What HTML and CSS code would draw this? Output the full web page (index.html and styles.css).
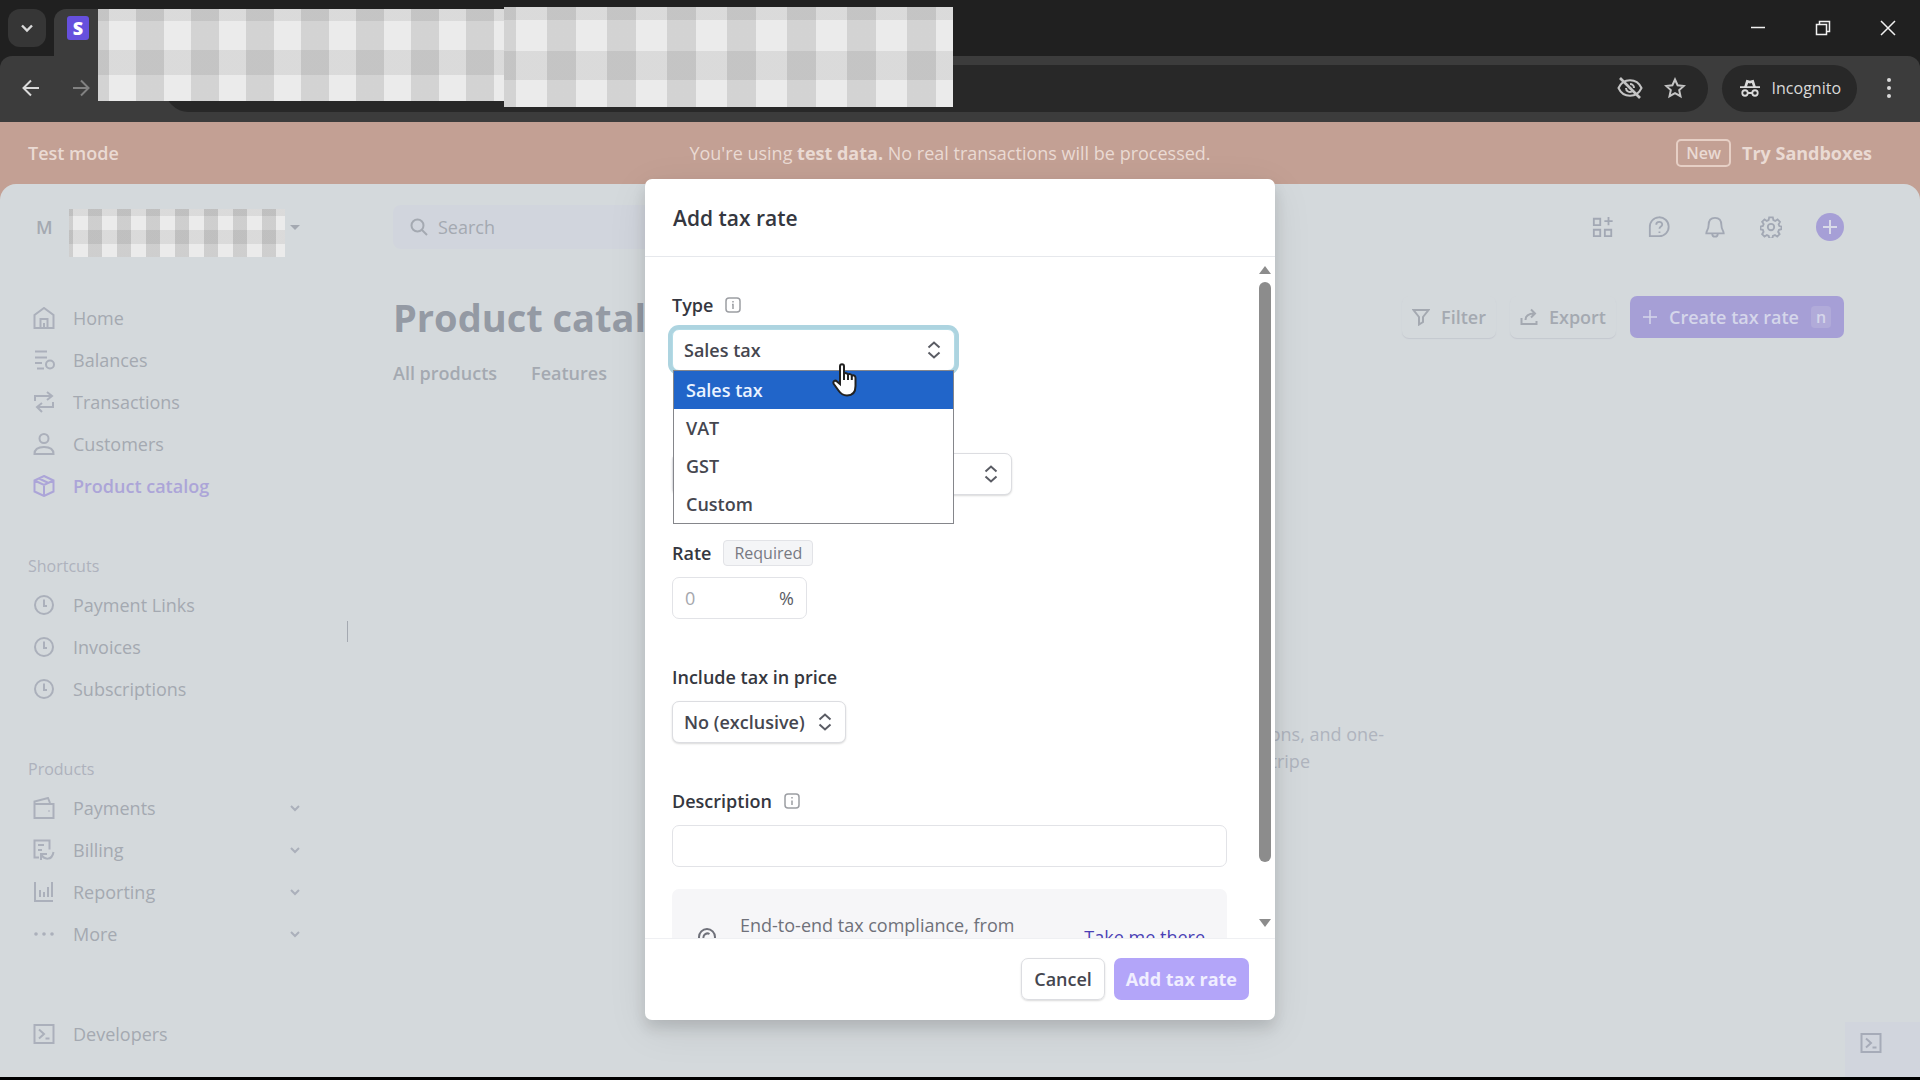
FILE: index.html
```
<!DOCTYPE html>
<html lang="en">
<head>
    <meta charset="UTF-8">
    <meta name="viewport" content="width=device-width, initial-scale=1.0">
    <title>Product catalog - Add tax rate</title>
    <link rel="stylesheet" href="styles.css">
</head>
<body>
    <!-- Browser window -->
    <header class="browser">
        <div class="tab-strip">
            <button class="tab-search" aria-label="Search tabs">
                <svg width="14" height="14" viewBox="0 0 14 14"><path d="M2 4.500l5 5 5-5" stroke-width="2.400"/></svg>
            </button>
            <div class="tab"><span class="favicon">S</span></div>
            <div class="window-controls">
                <button aria-label="Minimize"><svg width="16" height="16" viewBox="0 0 16 16"><path d="M1 7.500h14"/></svg></button>
                <button aria-label="Restore"><svg width="16" height="16" viewBox="0 0 16 16"><path d="M1.500 4.500h10v10h-10zM4.500 4.500v-3h10v10h-3"/></svg></button>
                <button aria-label="Close"><svg width="16" height="16" viewBox="0 0 16 16"><path d="M1 1l14 14M15 1L1 15"/></svg></button>
            </div>
        </div>
        <div class="toolbar">
            <button aria-label="Back"><svg width="18" height="18" viewBox="0 0 18 18"><path d="M17 9H2M9 1.500L1.500 9 9 16.500"/></svg></button>
            <button class="muted" aria-label="Forward"><svg width="18" height="18" viewBox="0 0 18 18"><path d="M1 9h15M9 1.500L16.500 9 9 16.500"/></svg></button>
            <div class="address-bar">
                <svg width="26" height="22" viewBox="0 0 26 22"><path d="M1.500 11C4 5.500 8 3.200 13 3.200S22 5.500 24.500 11C22 16.500 18 18.800 13 18.800S4 16.500 1.500 11z"/><path d="M9 11a4 4 0 0 0 6 3.500M13 7a4 4 0 0 1 4 4"/><path d="M3 1l20 20" stroke-width="2.600"/></svg>
                <svg width="22" height="22" viewBox="0 0 22 22"><path d="M11 2.500l2.600 5.700 6.200.7-4.600 4.200 1.300 6.100L11 16.100l-5.500 3.100 1.300-6.100L2.200 8.900l6.200-.7z"/></svg>
            </div>
            <div class="incognito">
                <svg width="20" height="20" viewBox="0 0 22 20"><path d="M0 9h22M8 15.500h6"/><path class="solid" d="M4.500 9L7 1l4 1 4-1 2.500 8h-3L13 4.500 11 5l-2-.500L7.500 9z"/><circle cx="5.500" cy="15.500" r="3"/><circle cx="16.500" cy="15.500" r="3"/></svg>
                Incognito
            </div>
            <button aria-label="Menu"><svg class="solid" width="6" height="22" viewBox="0 0 6 22"><circle cx="3" cy="3" r="2"/><circle cx="3" cy="11" r="2"/><circle cx="3" cy="19" r="2"/></svg></button>
        </div>
        <div class="redacted redacted-tab"></div>
        <div class="redacted redacted-url"></div>
    </header>

    <div class="viewport">
        <div class="banner">
            <strong>Test mode</strong>
            <span>You're using <b>test data.</b> No real transactions will be processed.</span>
            <div class="sandbox">
                <span class="new-badge">New</span>
                <a href="#">Try Sandboxes</a>
            </div>
        </div>

        <div class="dashboard">
            <aside class="sidebar">
                <div class="account">
                    <span class="account-logo">M</span>
                    <span class="redacted redacted-account"></span>
                    <svg class="solid" width="10" height="5" viewBox="0 0 10 5"><path d="M0 0h10L5 5z"/></svg>
                </div>
                <nav class="nav">
                    <a href="#"><svg width="22" height="22" viewBox="0 0 22 22"><path d="M1.500 8L11 1l9.500 7v13h-19zM7.500 21v-9h7v9M11 21v-5"/></svg>Home</a>
                    <a href="#"><svg width="22" height="22" viewBox="0 0 22 22"><path d="M2 2.500h12M2 8.500h12M2 14h7M4 19.500h7"/><circle cx="17" cy="15.500" r="4"/></svg>Balances</a>
                    <a href="#"><svg width="22" height="22" viewBox="0 0 22 22"><path d="M2 10V5h17M14 1l5 4-5 4M20 11v5H4M9 12l-5 4 5 5"/></svg>Transactions</a>
                    <a href="#"><svg width="22" height="22" viewBox="0 0 22 22"><circle cx="11" cy="5.500" r="4.500"/><path d="M1.500 21c0-5 4-7 9.500-7s9.500 2 9.500 7z"/></svg>Customers</a>
                    <a href="#" class="active"><svg width="22" height="22" viewBox="0 0 22 22"><path d="M11 1l9.500 4.500v11L11 21l-9.500-4.500v-11zM1.500 5.500L11 10l9.500-4.500M11 10v11M6 3.500l9.500 4.500"/></svg>Product catalog</a>
                </nav>
                <h2>Shortcuts</h2>
                <nav class="nav">
                    <a href="#"><svg width="22" height="22" viewBox="0 0 22 22"><circle cx="11" cy="11" r="9"/><path d="M11 5.500v6.500h3"/></svg>Payment Links</a>
                    <a href="#"><svg width="22" height="22" viewBox="0 0 22 22"><circle cx="11" cy="11" r="9"/><path d="M11 5.500v6.500h3"/></svg>Invoices</a>
                    <a href="#"><svg width="22" height="22" viewBox="0 0 22 22"><circle cx="11" cy="11" r="9"/><path d="M11 5.500v6.500h3"/></svg>Subscriptions</a>
                </nav>
                <h2>Products</h2>
                <nav class="nav">
                    <a href="#"><svg width="22" height="22" viewBox="0 0 22 22"><path d="M1.500 7h19v14h-19zM1.500 7V4.500L15 1l2 5M16 13.500v1"/></svg>Payments<svg class="chevron" width="12" height="8" viewBox="0 0 12 8"><path d="M2 2l4 4 4-4"/></svg></a>
                    <a href="#"><svg width="22" height="22" viewBox="0 0 22 22"><path d="M6 18.500H1.500v-17h15v9M5 6h6M5 11h4M8 21v-6h6M8 15c3 6 11 7 12.500-2"/></svg>Billing<svg class="chevron" width="12" height="8" viewBox="0 0 12 8"><path d="M2 2l4 4 4-4"/></svg></a>
                    <a href="#"><svg width="22" height="22" viewBox="0 0 22 22"><path d="M2 1v19h18M7 9v7M11 11v5M15 6v10M19 1v15"/></svg>Reporting<svg class="chevron" width="12" height="8" viewBox="0 0 12 8"><path d="M2 2l4 4 4-4"/></svg></a>
                    <a href="#"><svg class="solid" width="22" height="22" viewBox="0 0 22 22"><circle cx="3" cy="11" r="1.800"/><circle cx="11" cy="11" r="1.800"/><circle cx="19" cy="11" r="1.800"/></svg>More<svg class="chevron" width="12" height="8" viewBox="0 0 12 8"><path d="M2 2l4 4 4-4"/></svg></a>
                </nav>
                <nav class="nav nav-bottom">
                    <a href="#"><svg width="22" height="22" viewBox="0 0 22 22"><path d="M1.500 2h19v18h-19zM6 6.500l5 4.500-5 4.500M12.500 15.500h4"/></svg>Developers</a>
                </nav>
                <span class="resize-handle"></span>
            </aside>

            <main class="main">
                <div class="topbar">
                    <label class="search">
                        <svg width="18" height="18" viewBox="0 0 18 18"><circle cx="7.500" cy="7.500" r="6"/><path d="M12 12l5 5"/></svg>
                        <input type="search" placeholder="Search" aria-label="Search">
                    </label>
                    <div class="topbar-icons">
                        <button aria-label="Apps"><svg width="22" height="22" viewBox="0 0 24 24"><path d="M2 3h7v7H2zM2 15h7v7H2zM14 15h7v7h-7zM18 1v9M13.500 5.500h9"/></svg></button>
                        <button aria-label="Help"><svg width="22" height="22" viewBox="0 0 24 24"><path d="M2 22v-9.500A10.300 10.300 0 1 1 12.300 22zM9 9.500c0-4 6.500-4 6.500-.3 0 2.300-3 2.300-3 4.800M12.500 17v1.500"/></svg></button>
                        <button aria-label="Notifications"><svg width="22" height="22" viewBox="0 0 24 24"><path d="M5 10c0-5 2.500-8 7-8s7 3 7 8c0 5 2.500 6 2.500 9h-19c0-3 2.500-4 2.500-9zM9 19.500c0 4 6 4 6 0"/></svg></button>
                        <button aria-label="Settings"><svg width="22" height="22" viewBox="0 0 24 24"><circle cx="12" cy="12" r="3.500"/><path d="M10 1.500h4l.6 3 2 .9 2.600-1.700 2.600 2.800-1.500 2.500.8 2 2.400.6v2.800l-2.800.7-.9 2.200 1.600 2.500-2.600 2.600-2.500-1.600-2.200.9-.6 2.800h-3.300l-.7-2.800-2-.9-2.600 1.600-2.600-2.600 1.600-2.500-.8-2.200-2.600-.6v-3l2.700-.7.8-2L2.300 6.300l2.600-2.600L7.400 5.400l2-.9z"/></svg></button>
                        <button class="add-button" aria-label="Create"><svg width="16" height="16" viewBox="0 0 16 16"><path d="M8 1v14M1 8h14"/></svg></button>
                    </div>
                </div>
                <div class="page-head">
                    <h1>Product catalog</h1>
                    <div class="page-actions">
                        <button class="ghost"><svg width="18" height="18" viewBox="0 0 18 18"><path d="M1.500 2h15L11 9v5l-4 2.500V9z"/></svg>Filter</button>
                        <button class="ghost"><svg width="18" height="18" viewBox="0 0 18 18"><path d="M1.500 10v6h15v-3M5.500 12c0-4 3-6.500 9-6.500M11 1.500l4 4-4 4"/></svg>Export</button>
                        <button class="create"><svg width="14" height="14" viewBox="0 0 14 14"><path d="M7 0v14M0 7h14"/></svg>Create tax rate<kbd>n</kbd></button>
                    </div>
                </div>
                <div class="tabs">
                    <a href="#">All products</a>
                    <a href="#">Features</a>
                </div>
                <div class="empty">
                    <p>Use tax rates on invoices, subscriptions, and one-</p>
                    <p class="short">time payments with Stripe</p>
                </div>
            </main>
            <button class="console" aria-label="Open console"><svg width="22" height="22" viewBox="0 0 22 22"><path d="M1.500 2h19v18h-19zM6 6.500l5 4.500-5 4.500M12.500 15.500h4"/></svg></button>
        </div>

        <!-- Modal -->
        <div class="overlay">
            <form class="modal" role="dialog" aria-labelledby="modalTitle">
                <div class="modal-header"><h2 id="modalTitle">Add tax rate</h2></div>
                <div class="modal-body">
                    <div class="fields">
                        <div class="field">
                            <div class="label-row">
                                <label for="type">Type</label>
                                <svg class="info" width="16" height="16" viewBox="0 0 16 16"><rect x="1" y="1" width="14" height="14" rx="3"/><path d="M8 4v1.500M7 7.500h1V12"/></svg>
                            </div>
                            <div class="select select-type focused">
                                <select id="type">
                                    <option>Sales tax</option>
                                    <option>VAT</option>
                                    <option>GST</option>
                                    <option>Custom</option>
                                </select>
                                <svg width="14" height="18" viewBox="0 0 14 18"><path d="M1.500 6.500L7 1.500l5.500 5M1.500 11.500l5.500 5 5.500-5"/></svg>
                                <ul class="options" role="listbox" aria-label="Type">
                                    <li role="option" aria-selected="true" class="selected">Sales tax</li>
                                    <li role="option">VAT</li>
                                    <li role="option">GST</li>
                                    <li role="option">Custom</li>
                                </ul>
                                <svg class="pointer" width="26" height="34" viewBox="0 0 26 34"><path d="M8 3.500C8 .5 12 .5 12 3.500V11c1-1.500 3.500-1 4 .8 1-1.300 3.400-.8 3.800 1 1-1 3.700-.5 3.700 2V23c0 6-3 9.500-8.500 9.500-4.500 0-6.500-2-8.500-5L1.800 21C.5 18.500 3 16.500 5 18.500L8 21z"/><path d="M12 11v6M16 12v5M19.800 13v4"/></svg>
                            </div>
                        </div>
                        <div class="field">
                            <div class="label-row"></div>
                            <div class="select select-region">
                                <select aria-label="Region"><option></option></select>
                                <svg width="14" height="18" viewBox="0 0 14 18"><path d="M1.500 6.500L7 1.500l5.500 5M1.500 11.500l5.500 5 5.500-5"/></svg>
                            </div>
                        </div>
                        <div class="field">
                            <div class="label-row">
                                <label for="rate">Rate</label>
                                <span class="required">Required</span>
                            </div>
                            <div class="rate"><input id="rate" type="text" placeholder="0"><span>%</span></div>
                        </div>
                        <div class="field">
                            <div class="label-row"><label for="inclusive">Include tax in price</label></div>
                            <div class="select select-inclusive">
                                <select id="inclusive"><option>No (exclusive)</option></select>
                                <svg width="14" height="18" viewBox="0 0 14 18"><path d="M1.500 6.500L7 1.500l5.500 5M1.500 11.500l5.500 5 5.500-5"/></svg>
                            </div>
                        </div>
                        <div class="field">
                            <div class="label-row">
                                <label for="description">Description</label>
                                <svg class="info" width="16" height="16" viewBox="0 0 16 16"><rect x="1" y="1" width="14" height="14" rx="3"/><path d="M8 4v1.500M8 7.500V12"/></svg>
                            </div>
                            <input id="description" class="text-input" type="text">
                        </div>
                        <div class="callout">
                            <svg width="20" height="20" viewBox="0 0 20 20"><circle cx="10" cy="10" r="8"/><path d="M6.500 11a4 4 0 0 1 6-4"/></svg>
                            <p>End-to-end tax compliance, from</p>
                            <a href="#">Take me there</a>
                        </div>
                    </div>
                    <div class="scrollbar">
                        <svg class="solid" width="12" height="8" viewBox="0 0 12 8"><path d="M6 0l6 8H0z"/></svg>
                        <div class="track"><div class="thumb"></div></div>
                        <svg class="solid" width="12" height="8" viewBox="0 0 12 8"><path d="M0 0h12L6 8z"/></svg>
                    </div>
                </div>
                <div class="modal-footer">
                    <button type="button" class="cancel">Cancel</button>
                    <button type="submit" class="submit">Add tax rate</button>
                </div>
            </form>
        </div>
    </div>
</body>
</html>
```
FILE: styles.css
```
* {
    box-sizing: border-box;
}
body {
    margin: 0;
    height: 100vh;
    display: flex;
    flex-direction: column;
    background: #000;
    padding-bottom: 3px;
    overflow: hidden;
    font-family: "Open Sans", "Noto Sans", sans-serif;
    font-size: 18px;
    line-height: 24px;
}
h1, h2, p, ul {
    margin: 0;
    padding: 0;
}
a {
    color: inherit;
    text-decoration: none;
}
button, input, select {
    font: inherit;
    color: inherit;
}
button {
    display: flex;
    align-items: center;
    justify-content: center;
    border: none;
    background: none;
    padding: 0;
}
svg {
    display: block;
    flex-shrink: 0;
    fill: none;
    stroke: currentColor;
    stroke-width: 2;
}
.solid {
    fill: currentColor;
    stroke: none;
}

/* Browser */
.browser {
    position: relative;
    background: #202020;
    color: #dadada;
}
.tab-strip {
    height: 56px;
    display: flex;
    align-items: flex-end;
}
.tab-search {
    width: 38px;
    height: 38px;
    margin: 0 8px 9px;
    border-radius: 12px;
    background: #363636;
}
.tab {
    width: 320px;
    height: 47px;
    padding: 7px 13px;
    border-radius: 12px 12px 0 0;
    background: #3c3c3c;
}
.favicon {
    display: block;
    width: 22px;
    height: 24px;
    border-radius: 3px;
    background: #6650dd;
    color: #fff;
    font-weight: 800;
    text-align: center;
}
.window-controls {
    display: flex;
    gap: 49px;
    margin-left: auto;
    padding: 0 24px 20px 0;
    color: #f0f0f0;
}
.window-controls svg {
    stroke-width: 1.5;
}
.toolbar {
    height: 66px;
    display: flex;
    align-items: center;
    padding: 0 28px 2px 22px;
    border-radius: 12px 12px 0 0;
    background: #3c3c3c;
}
.toolbar button + button {
    margin-left: 32px;
}
.toolbar .muted {
    color: #818181;
}
.address-bar {
    flex: 1;
    height: 47px;
    display: flex;
    align-items: center;
    justify-content: flex-end;
    gap: 21px;
    margin: 0 14px 0 75px;
    padding-right: 22px;
    border-radius: 24px;
    background: #282828;
    color: #c4c4c4;
}
.incognito {
    height: 47px;
    display: flex;
    align-items: center;
    gap: 12px;
    margin-right: 29px;
    padding: 0 16px 0 18px;
    border-radius: 24px;
    background: #282828;
    font-size: 16px;
}
.redacted {
    background-color: #ebebeb;
}
.redacted-tab {
    position: absolute;
    left: 98px;
    top: 9px;
    width: 406px;
    height: 92px;
    background-image:
        repeating-linear-gradient(90deg, rgba(0, 0, 0, 0.1) 0 11px, transparent 11px 38px, rgba(0, 0, 0, 0.1) 38px 55px),
        linear-gradient(rgba(0, 0, 0, 0.07) 12px, transparent 12px 41px, rgba(0, 0, 0, 0.07) 41px 66px, transparent 66px);
}
.redacted-url {
    position: absolute;
    left: 504px;
    top: 7px;
    width: 449px;
    height: 100px;
    background-image:
        repeating-linear-gradient(90deg, rgba(0, 0, 0, 0.1) 0 12px, transparent 12px 43px, rgba(0, 0, 0, 0.1) 43px 60px),
        linear-gradient(rgba(0, 0, 0, 0.07) 13px, transparent 13px 44px, rgba(0, 0, 0, 0.07) 44px 73px, transparent 73px);
}
.redacted-account {
    width: 216px;
    height: 48px;
    margin-top: 12px;
    background-image:
        repeating-linear-gradient(90deg, rgba(0, 0, 0, 0.12) 0 4px, transparent 4px 19px, rgba(0, 0, 0, 0.12) 19px 29px),
        linear-gradient(rgba(0, 0, 0, 0.07) 7px, transparent 7px 21px, rgba(0, 0, 0, 0.07) 21px 35px, transparent 35px);
}

/* Page */
.viewport {
    position: relative;
    flex: 1;
    min-height: 0;
    display: flex;
    flex-direction: column;
    background: #c3a094;
}
.banner {
    height: 62px;
    display: grid;
    grid-template-columns: 1fr auto 1fr;
    align-items: center;
    padding: 0 48px 0 28px;
    color: #eadad3;
}
.banner strong {
    font-weight: 600;
}
.sandbox {
    display: flex;
    align-items: center;
    justify-content: flex-end;
    gap: 11px;
    font-weight: 700;
}
.new-badge {
    padding: 0 8px;
    border: 2px solid #e6cfc5;
    border-radius: 5px;
    font-size: 16px;
    font-weight: 600;
}
.dashboard {
    position: relative;
    flex: 1;
    min-height: 0;
    display: flex;
    border-radius: 16px 16px 0 0;
    background: #d4d9dc;
    color: #a4a9b1;
}
.sidebar {
    position: relative;
    width: 348px;
    display: flex;
    flex-direction: column;
    padding: 0 47px 22px 28px;
}
.account {
    height: 86px;
    display: flex;
    align-items: center;
    gap: 5px;
    margin-right: -8px;
    margin-bottom: 27px;
}
.account-logo {
    width: 36px;
    padding-left: 8px;
    font-weight: 600;
}
.nav a {
    height: 42px;
    display: flex;
    align-items: center;
    gap: 18px;
    padding-left: 5px;
}
.nav svg {
    color: #abb0bb;
}
.nav .chevron {
    margin-left: auto;
}
.nav .active, .nav .active svg {
    color: #aca5d8;
    font-weight: 600;
}
.nav-bottom {
    margin-top: auto;
}
.sidebar h2 {
    margin-top: 41px;
    font-size: 16px;
    font-weight: 400;
    line-height: 36px;
    color: #aeb2bd;
}
.resize-handle {
    position: absolute;
    right: 0;
    top: 437px;
    width: 1px;
    height: 21px;
    background: #a4a9b1;
}
.main {
    flex: 1;
    min-width: 0;
    padding: 0 76px 0 45px;
}
.topbar {
    height: 86px;
    display: flex;
    align-items: center;
    justify-content: space-between;
}
.search {
    width: 500px;
    height: 44px;
    display: flex;
    align-items: center;
    gap: 10px;
    padding: 0 17px;
    border-radius: 8px;
    background: #d1d5dd;
}
.search input {
    flex: 1;
    border: none;
    background: none;
    padding: 0;
}
.search input::placeholder {
    color: #a4a9b1;
    opacity: 1;
}
.topbar-icons {
    display: flex;
    align-items: center;
    gap: 34px;
    color: #a2a8b4;
}
.add-button {
    width: 28px;
    height: 28px;
    border-radius: 50%;
    background: #a69fd6;
    color: #d9dae8;
}
.page-head {
    display: flex;
    align-items: center;
    justify-content: space-between;
    padding-top: 21px;
}
h1 {
    font-size: 38px;
    line-height: 52px;
    color: #949aa4;
}
.page-actions {
    display: flex;
    gap: 14px;
    font-weight: 600;
}
.ghost {
    height: 42px;
    gap: 11px;
    padding: 0 10px;
    border-radius: 7px;
    box-shadow: 0 1px 1px #c4c8cf;
}
.create {
    height: 42px;
    gap: 12px;
    padding: 0 13px;
    border-radius: 7px;
    background: #a69fd6;
    color: #d5d6ea;
}
.create svg {
    stroke-width: 1.5;
}
.create kbd {
    width: 20px;
    border-radius: 4px;
    background: #b1abd9;
    font: inherit;
    font-size: 16px;
    line-height: 22px;
}
.tabs {
    display: flex;
    gap: 34px;
    padding-top: 18px;
    font-weight: 600;
}
.empty {
    width: 991px;
    padding-top: 336px;
    text-align: right;
    line-height: 27px;
    color: #afb4be;
}
.empty .short {
    padding-right: 74px;
}
.console {
    position: absolute;
    right: 0;
    bottom: 0;
    width: 75px;
    height: 55px;
    padding: 0 24px 14px 0;
    background: #d1d5dd;
    color: #a6abb8;
}

/* Modal */
.overlay {
    position: absolute;
    inset: 0;
    display: flex;
    justify-content: center;
    padding: 57px 0;
}
.modal {
    width: 630px;
    display: flex;
    flex-direction: column;
    border-radius: 7px;
    background: #fff;
    color: #45464f;
    box-shadow: 0 8px 14px rgba(0, 0, 0, 0.12), 0 10px 40px rgba(0, 0, 0, 0.08);
    font-weight: 600;
}
.modal-header {
    padding: 23px 28px 21px;
    border-bottom: 1px solid #e6e8ec;
}
.modal-header h2 {
    font-size: 21px;
    font-weight: 600;
    line-height: 33px;
    color: #353740;
}
.modal-body {
    flex: 1;
    min-height: 0;
    display: flex;
    overflow: hidden;
}
.fields {
    flex: 1;
    padding: 35px 31px 0 27px;
}
.field {
    margin-bottom: 45px;
}
.field:nth-child(5) {
    margin-bottom: 22px;
}
.label-row {
    height: 25px;
    display: flex;
    align-items: center;
    gap: 12px;
    margin-bottom: 12px;
    color: #353740;
}
.info {
    color: #9c9ea3;
    stroke-width: 1.5;
}
.required {
    padding: 0 10px;
    border: 1px solid #e2e3e7;
    border-radius: 4px;
    background: #f4f5f7;
    color: #777982;
    font-size: 16px;
    font-weight: 400;
}
.select {
    position: relative;
    height: 42px;
    display: grid;
    align-items: center;
}
.select select, .select > svg:not(.pointer) {
    grid-area: 1 / 1;
}
.select > svg:not(.pointer) {
    justify-self: end;
    margin-right: 14px;
    color: #5a5c64;
    pointer-events: none;
}
.select select {
    appearance: none;
    width: 100%;
    height: 42px;
    padding: 0 11px;
    border: 1px solid #dcdde1;
    border-radius: 7px;
    background: #fff;
    box-shadow: 0 1px 2px rgba(0, 0, 0, 0.15);
    font-weight: 600;
}
.select-type {
    width: 283px;
}
.select-region {
    width: 340px;
}
.select-inclusive {
    width: 174px;
}
.focused select {
    border-color: #b3dbe6;
    box-shadow: 0 0 0 4px #add4e0;
}
.options {
    position: absolute;
    z-index: 1;
    left: 1px;
    right: 1px;
    top: 41px;
    border: 1px solid #85868b;
    background: #fff;
    list-style: none;
    line-height: 38px;
}
.options li {
    padding: 0 12px;
}
.options .selected {
    background: #2165c9;
    color: #eaf3ff;
}
.pointer {
    position: absolute;
    z-index: 2;
    left: 160px;
    top: 34px;
    fill: #fff;
    color: #222;
}
.rate {
    width: 135px;
    height: 42px;
    display: flex;
    align-items: center;
    padding: 0 12px;
    border: 1px solid #e2e3e7;
    border-radius: 7px;
    color: #5a5c64;
    font-weight: 400;
}
.rate input {
    width: 80px;
    flex: 1;
    border: none;
    padding: 0;
}
.rate input::placeholder {
    color: #a5a7ad;
    opacity: 1;
}
.text-input {
    display: block;
    width: 100%;
    height: 42px;
    padding: 0 12px;
    border: 1px solid #e2e3e7;
    border-radius: 7px;
}
.callout {
    height: 96px;
    display: flex;
    align-items: center;
    padding: 0 22px 0 25px;
    border-radius: 7px;
    background: #f6f6f8;
    color: #6f717a;
    font-weight: 400;
}
.callout p {
    padding: 0 0 24px 23px;
}
.callout a {
    margin-left: auto;
    color: #4a3fb5;
    font-weight: 500;
}
.scrollbar {
    width: 17px;
    display: flex;
    flex-direction: column;
    padding: 9px 4px 11px 1px;
    color: #8c8c8c;
}
.track {
    flex: 1;
    padding: 8px 0 0;
}
.thumb {
    height: 91%;
    border-radius: 6px;
    background: #8c8c8c;
}
.modal-footer {
    display: flex;
    justify-content: flex-end;
    gap: 9px;
    padding: 19px 26px 20px;
    border-top: 1px solid #eff0f3;
}
.modal-footer button {
    height: 42px;
    padding: 0 12px;
    border-radius: 7px;
}
.modal-footer .cancel {
    border: 1px solid #dcdde1;
    box-shadow: 0 1px 2px rgba(0, 0, 0, 0.15);
}
.modal-footer .submit {
    background: #b3a5f9;
    color: #f0eeff;
    font-weight: 700;
}
```
